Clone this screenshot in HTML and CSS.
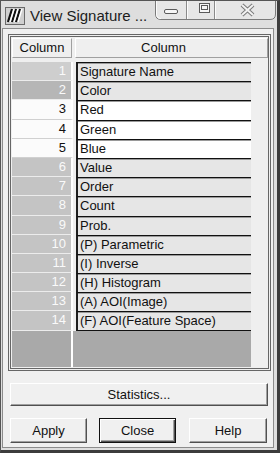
FILE: index.html
```html
<!DOCTYPE html>
<html lang="en">
<head>
  <meta charset="UTF-8" />
  <title>View Signature Columns</title>
  <link rel="stylesheet" href="styles.css">
</head>
<body>

  <div class="window">
    <!-- Title bar -->
    <div class="titlebar">
      <svg class="app-icon" width="20" height="19" viewBox="0 0 20 19">
        <rect x="0.5" y="1.5" width="19" height="17" fill="#cfcfcf" stroke="#6a6a6a"/>
        <path d="M3 16 L7 3 M7 16 L11 3 M11 16 L15 3" stroke="#111" stroke-width="2.2"/>
        <path d="M5 16 L9 3 M9 16 L13 3 M13 16 L17 3" stroke="#fff" stroke-width="1.4"/>
      </svg>
      <span class="title">View Signature ...</span>
      <svg class="caption-btns" width="123" height="19" viewBox="0 0 123 19">
        <path d="M1.5 0 V13 Q1.5 18.5 7 18.5 H116 Q121.5 18.5 121.5 13 V0" fill="#e6e6e6" stroke="#7a7a7a"/>
        <path d="M2.5 0 V13 Q2.5 17.5 7 17.5" fill="none" stroke="#fbfbfb"/>
        <path d="M32.5 0 V18 M60.5 0 V18" stroke="#8a8a8a"/>
        <path d="M33.5 0 V18 M61.5 0 V18" stroke="#fbfbfb"/>
        <rect x="10.5" y="8.5" width="13" height="4" rx="1.5" fill="#f6f6f6" stroke="#5a5a5a"/>
        <rect x="45.5" y="2.5" width="10" height="9" fill="#f6f6f6" stroke="#5a5a5a"/>
        <rect x="47.5" y="4.5" width="6" height="4" fill="#f6f6f6" stroke="#5a5a5a"/>
        <path d="M88 4 L99 14 M99 4 L88 14" stroke="#7a7a7a" stroke-width="4"/>
        <path d="M88 4 L99 14 M99 4 L88 14" stroke="#f2f2f2" stroke-width="2"/>
      </svg>
    </div>

    <div class="client">
      <div class="grid">
        <div class="grid-head">
          <div class="hcell hnum">Column</div>
          <div class="hcell hname">Column</div>
        </div>

        <div class="grid-rows">
          <div class="row"><div class="num first">1</div><div class="name">Signature Name</div></div>
          <div class="row"><div class="num dark">2</div><div class="name">Color</div></div>
          <div class="row sel"><div class="num">3</div><div class="name">Red</div></div>
          <div class="row sel"><div class="num">4</div><div class="name">Green</div></div>
          <div class="row sel"><div class="num">5</div><div class="name">Blue</div></div>
          <div class="row"><div class="num">6</div><div class="name">Value</div></div>
          <div class="row"><div class="num">7</div><div class="name">Order</div></div>
          <div class="row"><div class="num">8</div><div class="name">Count</div></div>
          <div class="row"><div class="num">9</div><div class="name">Prob.</div></div>
          <div class="row"><div class="num">10</div><div class="name">(P) Parametric</div></div>
          <div class="row"><div class="num">11</div><div class="name">(I) Inverse</div></div>
          <div class="row"><div class="num">12</div><div class="name">(H) Histogram</div></div>
          <div class="row"><div class="num">13</div><div class="name">(A) AOI(Image)</div></div>
          <div class="row last"><div class="num">14</div><div class="name">(F) AOI(Feature Space)</div></div>
        </div>

        <div class="filler">
          <div class="fill-num"></div>
          <div class="fill-name"></div>
        </div>
      </div>

      <button class="btn wide">Statistics...</button>

      <div class="btn-row">
        <button class="btn apply">Apply</button>
        <button class="btn default">Close</button>
        <button class="btn help">Help</button>
      </div>
    </div>
  </div>

</body>
</html>
```

FILE: styles.css
```css
* {
  box-sizing: border-box;
  margin: 0;
  padding: 0;
}

body {
  width: 280px;
  height: 453px;
  overflow: hidden;
  font-family: "Liberation Sans", Arial, sans-serif;
  background: #fff;
}

.window {
  width: 280px;
  height: 453px;
  background: #dedede;
  border-style: solid;
  border-width: 1px 3px 3px 1px;
  border-color: #555 #3c3c3c #3c3c3c #555;
  display: flex;
  flex-direction: column;
}

/* Title bar */
.titlebar {
  height: 27px;
  display: flex;
  align-items: flex-start;
}

.app-icon {
  margin: 5px 0 0 4px;
}

.title {
  margin: 6px 0 0 5px;
  font-size: 15px;
  line-height: 17px;
  color: #1c1c1c;
  white-space: nowrap;
}

.caption-btns {
  margin-left: auto;
}

/* Client area */
.client {
  flex: 1;
  margin: 0 3px 2px 1px;
  border: 1px solid #8c8c8c;
  background: #f0f0f0;
  padding: 5px 2px 3px 5px;
  display: flex;
  flex-direction: column;
}

.grid {
  height: 337px;
  border: 3px double #666;
  padding: 1px 0 1px 1px;
  background: #efefef;
  display: flex;
  flex-direction: column;
}

.grid-head {
  display: flex;
  gap: 3px;
  height: 20px;
}

.hcell {
  border: 1px solid;
  border-color: #fff #a0a0a0 #a0a0a0 #fff;
  font-size: 13px;
  line-height: 18px;
  text-align: center;
  color: #111;
}

.hnum {
  width: 60px;
}

.hname {
  flex: 1;
  padding-right: 16px;
}

.grid-rows {
  margin-top: 4px;
}

.row {
  display: flex;
  height: 19.2px;
  font-size: 13px;
  line-height: 17px;
}

.num {
  width: 61px;
  background: #c4c4c4;
  color: #fafafa;
  text-align: right;
  padding-right: 5px;
  border-right: 2px solid #fff;
  border-bottom: 1px solid #ececec;
}

.num.first {
  background: #cecece;
}

.num.dark {
  background: #b6b6b6;
}

.name {
  margin-left: 3px;
  width: 175px;
  background: #e6e6e6;
  color: #111;
  padding-left: 2px;
  border-left: 2px solid #1e1e1e;
  border-top: 1px solid #111;
  box-shadow: inset 0 1px 0 #9a9a9a;
  white-space: nowrap;
}

.row.sel .num {
  background: #fbfbfb;
  color: #111;
  border-bottom-color: #d0d0d0;
}

.row.sel .name {
  background: #fff;
}

.row.last .name {
  border-bottom: 1px solid #111;
}

.filler {
  flex: 1;
  display: flex;
}

.fill-num {
  width: 61px;
  background: #a9a9a9;
  border-right: 2px solid #fff;
}

.fill-name {
  width: 178px;
  background: #a9a9a9;
}

/* Buttons */
.btn {
  font-family: "Liberation Sans", Arial, sans-serif;
  font-size: 13px;
  color: #111;
  background: #f0f0f0;
  border: 1px solid;
  border-color: #fff #505050 #505050 #fff;
  box-shadow: inset -1px -1px 0 #a0a0a0;
}

.wide {
  margin: 12px 0 0 2px;
  width: 258px;
  height: 23px;
}

.btn-row {
  display: flex;
  margin: 12px 0 0 2px;
  height: 25px;
}

.apply {
  width: 77px;
}

.default {
  width: 77px;
  margin-left: 12px;
  border-color: #111;
  box-shadow: inset 1px 1px 0 #fff, inset -1px -1px 0 #505050, inset -2px -2px 0 #a0a0a0;
}

.help {
  width: 78px;
  margin-left: 13px;
}
```
